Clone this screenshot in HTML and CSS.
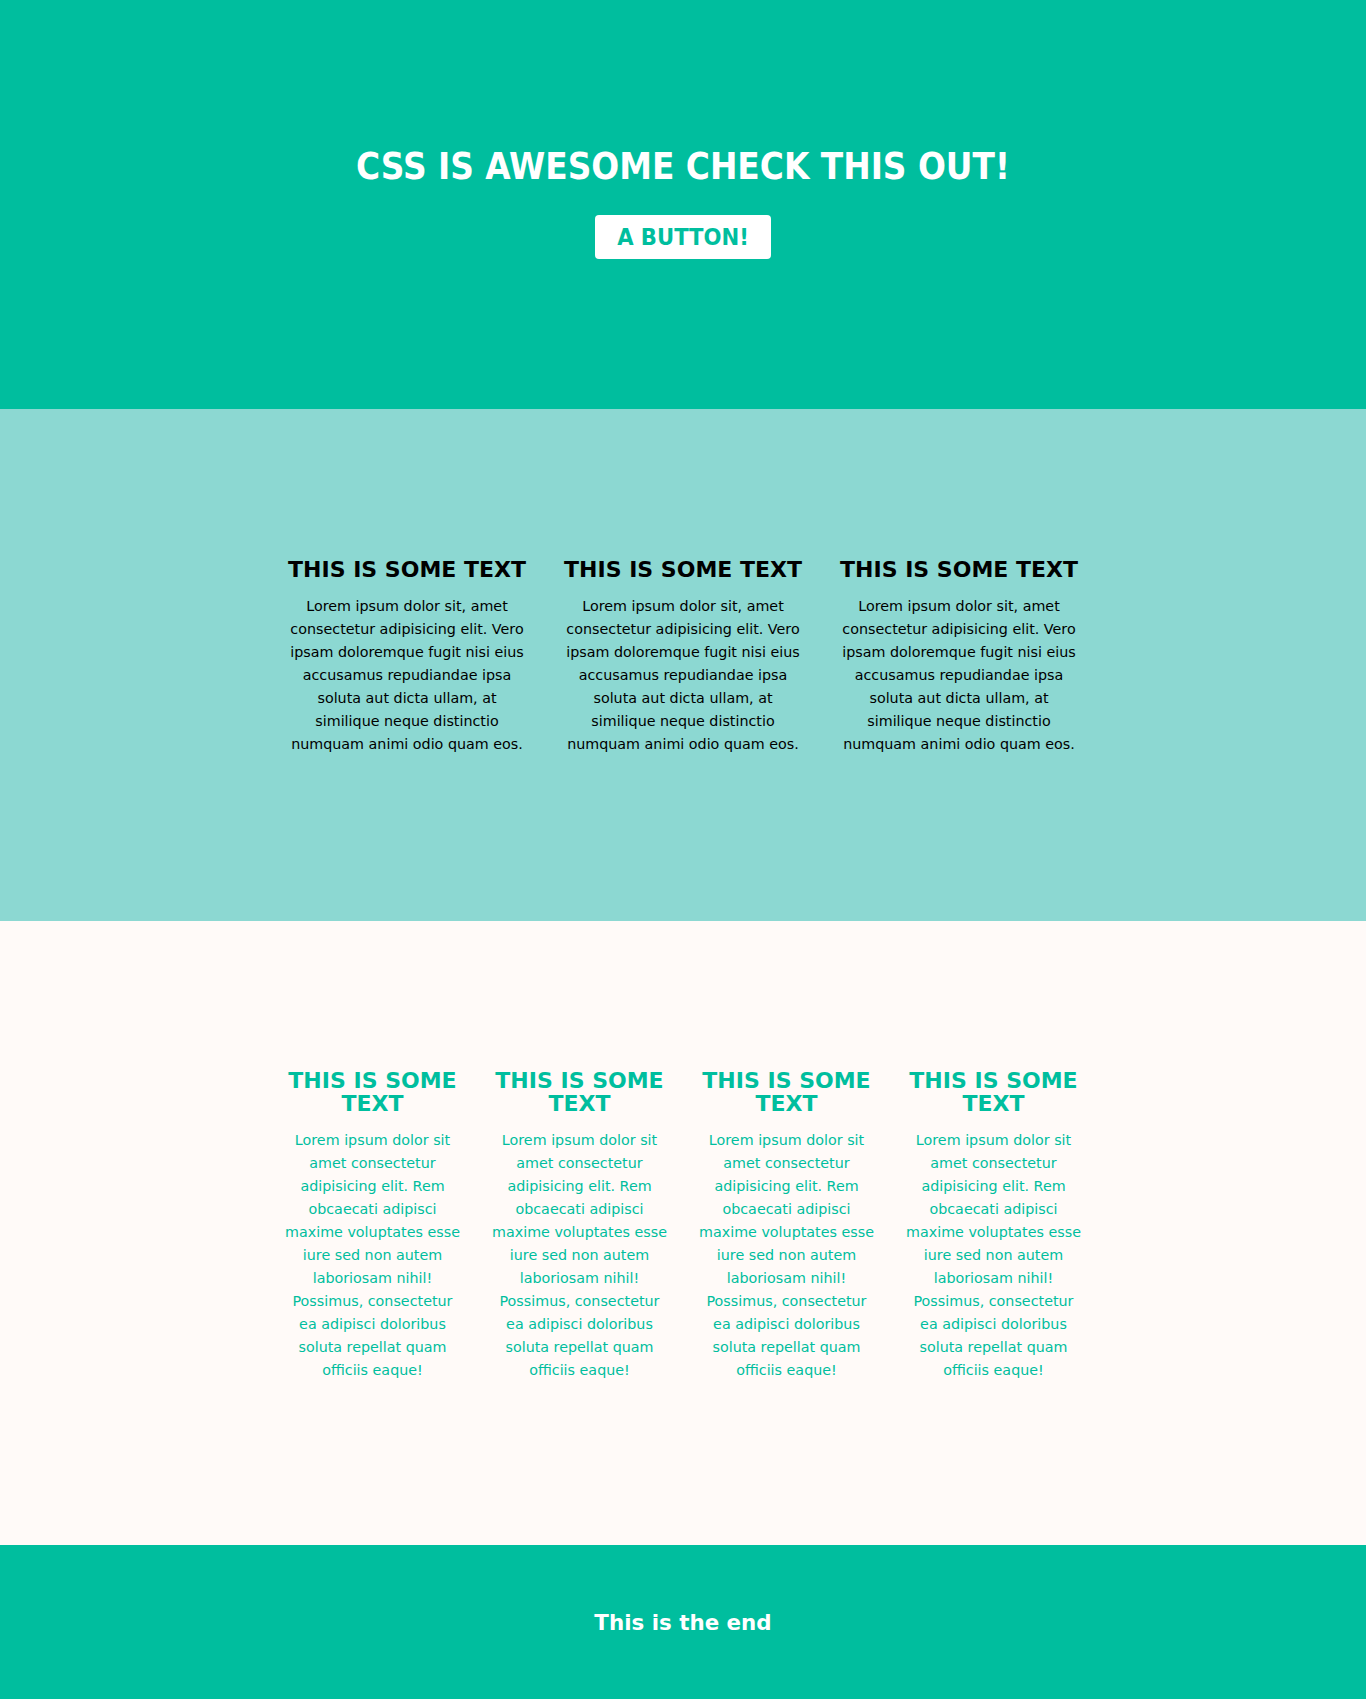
FILE: index.html
```html
<!DOCTYPE html>
<html>
<head>
<meta charset="utf-8">
<link rel="stylesheet" href="styles.css">
</head>
<body>
<header class="hero">
  <h1 class="hero-title">CSS IS AWESOME CHECK THIS OUT!</h1>
  <a class="hero-btn">A BUTTON!</a>
</header>
<section class="band band-light">
  <div class="cols cols-3">
    <div class="col">
      <h2 class="col-title">THIS IS SOME TEXT</h2>
      <p class="col-text">Lorem ipsum dolor sit, amet consectetur adipisicing elit. Vero ipsam doloremque fugit nisi eius accusamus repudiandae ipsa soluta aut dicta ullam, at similique neque distinctio numquam animi odio quam eos.</p>
    </div>
    <div class="col">
      <h2 class="col-title">THIS IS SOME TEXT</h2>
      <p class="col-text">Lorem ipsum dolor sit, amet consectetur adipisicing elit. Vero ipsam doloremque fugit nisi eius accusamus repudiandae ipsa soluta aut dicta ullam, at similique neque distinctio numquam animi odio quam eos.</p>
    </div>
    <div class="col">
      <h2 class="col-title">THIS IS SOME TEXT</h2>
      <p class="col-text">Lorem ipsum dolor sit, amet consectetur adipisicing elit. Vero ipsam doloremque fugit nisi eius accusamus repudiandae ipsa soluta aut dicta ullam, at similique neque distinctio numquam animi odio quam eos.</p>
    </div>
  </div>
</section>
<section class="band band-white">
  <div class="cols cols-4">
    <div class="col">
      <h2 class="col-title teal">THIS IS SOME TEXT</h2>
      <p class="col-text teal">Lorem ipsum dolor sit amet consectetur adipisicing elit. Rem obcaecati adipisci maxime voluptates esse iure sed non autem laboriosam nihil! Possimus, consectetur ea adipisci doloribus soluta repellat quam officiis eaque!</p>
    </div>
    <div class="col">
      <h2 class="col-title teal">THIS IS SOME TEXT</h2>
      <p class="col-text teal">Lorem ipsum dolor sit amet consectetur adipisicing elit. Rem obcaecati adipisci maxime voluptates esse iure sed non autem laboriosam nihil! Possimus, consectetur ea adipisci doloribus soluta repellat quam officiis eaque!</p>
    </div>
    <div class="col">
      <h2 class="col-title teal">THIS IS SOME TEXT</h2>
      <p class="col-text teal">Lorem ipsum dolor sit amet consectetur adipisicing elit. Rem obcaecati adipisci maxime voluptates esse iure sed non autem laboriosam nihil! Possimus, consectetur ea adipisci doloribus soluta repellat quam officiis eaque!</p>
    </div>
    <div class="col">
      <h2 class="col-title teal">THIS IS SOME TEXT</h2>
      <p class="col-text teal">Lorem ipsum dolor sit amet consectetur adipisicing elit. Rem obcaecati adipisci maxime voluptates esse iure sed non autem laboriosam nihil! Possimus, consectetur ea adipisci doloribus soluta repellat quam officiis eaque!</p>
    </div>
  </div>
</section>
<footer class="footer">
  <p class="footer-text">This is the end</p>
</footer>
</body>
</html>
```

FILE: styles.css
```css
* { box-sizing: border-box; }
html, body { margin: 0; padding: 0; }
body {
  font-family: "DejaVu Sans", Verdana, sans-serif;
  background: #fffaf8;
}
.hero {
  height: 409px;
  background: #00be9e;
  display: flex;
  flex-direction: column;
  align-items: center;
  padding-top: 146px;
}
.hero-title {
  margin: 0;
  color: #fff;
  font-family: "DejaVu Sans Condensed", "DejaVu Sans", sans-serif;
  font-weight: bold;
  font-size: 36.5px;
  line-height: 42px;
}
.hero-btn {
  margin-top: 27px;
  background: #fff;
  color: #00be9e;
  font-family: "DejaVu Sans Condensed", "DejaVu Sans", sans-serif;
  font-weight: bold;
  font-size: 23.5px;
  line-height: 44px;
  width: 176px;
  text-align: center;
  border-radius: 4px;
}
.band {
  display: flex;
  justify-content: center;
  align-items: center;
}
.band-light {
  height: 512px;
  background: #8cd8d2;
}
.band-white {
  height: 624px;
  background: #fffaf8;
}
.cols {
  width: 828px;
  display: grid;
  margin-top: -16px;
}
.cols-3 { grid-template-columns: repeat(3, 1fr); }
.cols-4 { grid-template-columns: repeat(4, 1fr); }
.col {
  padding: 0 15px;
  text-align: center;
}
.cols-4 .col { padding: 0 14px; }
.col-title {
  margin: 0 0 14px;
  font-size: 22px;
  line-height: 23px;
  font-weight: bold;
  color: #000;
}
.col-text {
  margin: 0;
  font-size: 14.3px;
  line-height: 23px;
  color: #000;
}
.teal { color: #00be9e; }
.footer {
  height: 154px;
  background: #00be9e;
  display: flex;
  align-items: center;
  justify-content: center;
}
.footer-text {
  margin: 0;
  color: #fff;
  font-weight: bold;
  font-size: 21.4px;
}
```
